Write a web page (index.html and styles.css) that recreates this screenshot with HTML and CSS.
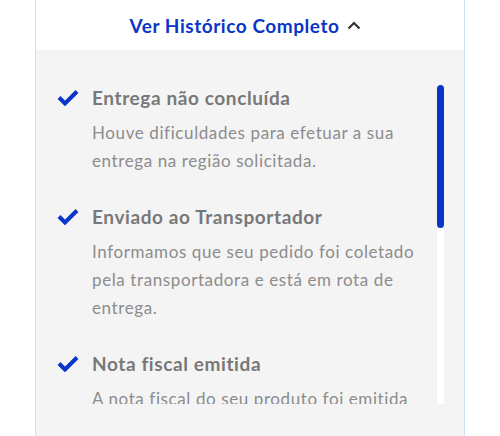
FILE: index.html
```html
<!DOCTYPE html>
<html>

<head>
    <title>Histórico do pedido</title>
    <link rel="stylesheet" href="styles.css">
</head>

<body>

    <div class="card">
        <div class="card-header">
            <a class="toggle" href="#">
                Ver Histórico Completo
                <svg class="chevron" width="14" height="10" viewBox="0 0 14 10">
                    <polyline points="1.5,8.5 7,3 12.5,8.5" />
                </svg>
            </a>
        </div>

        <div class="card-body">
            <ul class="history">
                <li class="step">
                    <div class="step-title">
                        <svg class="check" width="22" height="16" viewBox="0 0 22 16">
                            <polyline points="2,7.5 8,13.5 20,1.5" />
                        </svg>
                        Entrega não concluída
                    </div>
                    <p class="step-text">Houve dificuldades para efetuar a sua entrega na região solicitada.</p>
                </li>
                <li class="step">
                    <div class="step-title">
                        <svg class="check" width="22" height="16" viewBox="0 0 22 16">
                            <polyline points="2,7.5 8,13.5 20,1.5" />
                        </svg>
                        Enviado ao Transportador
                    </div>
                    <p class="step-text">Informamos que seu pedido foi coletado pela transportadora e está em rota de entrega.</p>
                </li>
                <li class="step">
                    <div class="step-title">
                        <svg class="check" width="22" height="16" viewBox="0 0 22 16">
                            <polyline points="2,7.5 8,13.5 20,1.5" />
                        </svg>
                        Nota fiscal emitida
                    </div>
                    <p class="step-text">A nota fiscal do seu produto foi emitida com sucesso.</p>
                </li>
                <li class="step">
                    <div class="step-title">
                        <svg class="check" width="22" height="16" viewBox="0 0 22 16">
                            <polyline points="2,7.5 8,13.5 20,1.5" />
                        </svg>
                        Pagamento aprovado
                    </div>
                    <p class="step-text">Seu pagamento foi aprovado e o pedido está sendo preparado.</p>
                </li>
            </ul>
            <!-- scrollbar drawn by hand, the browser hides the native one -->
            <div class="scroll-track">
                <div class="scroll-thumb"></div>
            </div>
        </div>
    </div>

</body>

</html>
```

FILE: styles.css
```css
body {
    margin: 0;
    background-color: #fff;
    font-family: Lato, 'Open Sans', sans-serif;
}

.card {
    margin-left: 35px;
    width: 428px;
    border-left: 1px solid #cfe1f5;
    border-right: 1px solid #cfe1f5;
}

.card-header {
    height: 50px;
    display: flex;
    align-items: center;
    justify-content: center;
    background-color: #fff;
}

.toggle {
    display: flex;
    align-items: center;
    gap: 8px;
    font-size: 19px;
    font-weight: 700;
    letter-spacing: 0.55px;
    color: #0a35c8;
    text-decoration: none;
    margin-right: 9px;
}

.chevron polyline {
    fill: none;
    stroke: #333;
    stroke-width: 2.2;
}

.card-body {
    display: flex;
    align-items: flex-start;
    background-color: #f4f4f4;
    padding: 35px 20px 40px 0;
}

.history {
    flex: 1;
    list-style: none;
    margin: 0;
    padding: 0 0 0 21px;
    height: 319px;
    overflow: hidden;
}

.scroll-track {
    width: 7px;
    height: 319px;
    background-color: #fff;
}

.scroll-thumb {
    height: 143px;
    background-color: #0a35c8;
    border-radius: 4px;
}

.step {
    padding-bottom: 29px;
}

.step-title {
    display: flex;
    align-items: center;
    gap: 13px;
    height: 25px;
    font-size: 19px;
    font-weight: 700;
    letter-spacing: 0.6px;
    color: #787878;
}

.check polyline {
    fill: none;
    stroke: #0a35c8;
    stroke-width: 4;
}

.step-text {
    margin: 9px 0 0 35px;
    padding-right: 6px;
    font-size: 17px;
    letter-spacing: 0.6px;
    line-height: 28px;
    color: #8c8c8c;
}
```
